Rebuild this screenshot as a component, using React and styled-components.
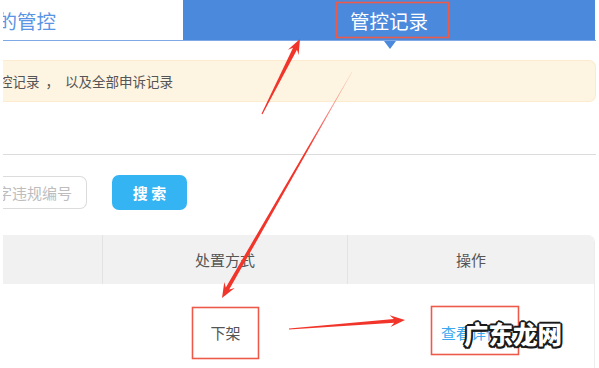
import React from 'react';
import styled, { createGlobalStyle, css } from 'styled-components';

const Global = createGlobalStyle`
  *, *::before, *::after { box-sizing: border-box; }
  html, body { margin: 0; padding: 0; background: #fff; }
  body { font-family: "Noto Sans CJK SC", "Microsoft YaHei", sans-serif; }
`;

const Page = styled.div`
  position: relative;
  width: 599px;
  height: 368px;
  overflow: hidden;
  background: #fff;
`;

const Frame = styled.div`
  margin-left: 3px;
  width: 593px;
  display: flex;
  flex-direction: column;
`;

const TabBar = styled.div`
  display: flex;
  height: 41px;
  border-bottom: 1px solid #7ea8e6;
`;

const Tab = styled.div`
  position: relative;
  display: flex;
  align-items: center;
  white-space: nowrap;
  font-size: 19.5px;
  ${p => p.$active ? css`
    flex: 0 0 412px;
    background: #4b89dc;
    color: #fff;
    justify-content: center;
    &::after {
      content: '';
      position: absolute;
      top: 100%;
      left: 50%;
      margin-left: -5px;
      margin-top: 1px;
      border-top: 8px solid #4b89dc;
      border-left: 6px solid transparent;
      border-right: 6px solid transparent;
    }
  ` : css`
    flex: 0 0 180px;
    color: #5a94e4;
    justify-content: flex-end;
    padding-right: 127px;
    overflow: hidden;
  `}
`;

const Notice = styled.div`
  margin-top: 19px;
  height: 42px;
  background: #fdf4e2;
  border: 1px solid #fcebcc;
  border-left: none;
  border-radius: 0 7px 7px 0;
  display: flex;
  align-items: center;
  font-size: 13.5px;
  color: #555;
`;

const ClipEnd = styled.div`
  flex: 0 0 ${p => p.$w}px;
  display: flex;
  justify-content: flex-end;
  overflow: hidden;
  white-space: pre;
`;

const Divider = styled.div`
  margin-top: 52px;
  height: 1px;
  background: #dcdcdc;
`;

const SearchRow = styled.div`
  margin-top: 20px;
  display: flex;
  align-items: center;
  gap: 25px;
  height: 35px;
`;

const SearchInput = styled.div`
  width: 84px;
  height: 33px;
  border: 1px solid #dcdcdc;
  border-left: none;
  border-radius: 0 7px 7px 0;
  display: flex;
  align-items: center;
  justify-content: flex-end;
  padding-right: 14px;
  overflow: hidden;
  white-space: nowrap;
  font-size: 15px;
  color: #bdbdbd;
`;

const SearchButton = styled.button`
  width: 75px;
  height: 35px;
  border: none;
  border-radius: 7px;
  background: #35b4f3;
  color: #fff;
  font-family: inherit;
  font-size: 15px;
  font-weight: bold;
  padding: 0;
`;

const Table = styled.div`
  margin-top: 25px;
  width: 592px;
  border-right: 1px solid #ececec;
  border-top-right-radius: 7px;
  overflow: hidden;
`;

const Row = styled.div`
  display: grid;
  grid-template-columns: 100px 245px 1fr;
  height: ${p => p.$head ? 49 : 96}px;
  background: ${p => p.$head ? '#f1f1f1' : '#fff'};
`;

const Cell = styled.div`
  display: flex;
  align-items: center;
  justify-content: center;
  font-size: 15px;
  color: ${p => p.$link ? '#3ba8ef' : '#555'};
  border-right: ${p => p.$sep ? '1px solid #e3e3e3' : 'none'};
`;

const Overlay = styled.svg`
  position: absolute;
  left: 0;
  top: 0;
  pointer-events: none;
`;

const Watermark = styled.div`
  position: absolute;
  left: 464px;
  top: 319px;
  font-size: 24.5px;
  font-weight: 900;
  color: #fff;
  line-height: 1.2;
  white-space: nowrap;
  text-shadow:
    -2px 0 #1a1a1a, 2px 0 #1a1a1a, 0 -2px #1a1a1a, 0 2px #1a1a1a,
    -1.5px -1.5px #1a1a1a, 1.5px 1.5px #1a1a1a, -1.5px 1.5px #1a1a1a, 1.5px -1.5px #1a1a1a;
`;

function arrow(x1, y1, x2, y2, tailW, shaftW, headL = 15, headW = 12) {
  const dx = x2 - x1, dy = y2 - y1, len = Math.hypot(dx, dy);
  const ux = dx / len, uy = dy / len, nx = -uy, ny = ux;
  const bx = x2 - ux * headL, by = y2 - uy * headL;
  const jx = bx + ux * 4, jy = by + uy * 4;
  const pts = [
    [x1 + nx * tailW / 2, y1 + ny * tailW / 2],
    [jx + nx * shaftW / 2, jy + ny * shaftW / 2],
    [bx + nx * headW / 2, by + ny * headW / 2],
    [x2, y2],
    [bx - nx * headW / 2, by - ny * headW / 2],
    [jx - nx * shaftW / 2, jy - ny * shaftW / 2],
    [x1 - nx * tailW / 2, y1 - ny * tailW / 2],
  ];
  return pts.map(p => p.map(v => v.toFixed(1)).join(',')).join(' ');
}

export default function App() {
  return (
    <Page>
      <Global />
      <Frame>
        <TabBar>
          <Tab><span>商品违规的管控</span></Tab>
          <Tab $active>管控记录</Tab>
        </TabBar>
        <Notice>
          <ClipEnd $w={170}>{'您可以查看全部管控记录  ，  以及全部申诉记录'}</ClipEnd>
        </Notice>
        <Divider />
        <SearchRow>
          <SearchInput><span>请输入商品名称或关键字违规编号</span></SearchInput>
          <SearchButton>搜 索</SearchButton>
        </SearchRow>
        <Table>
          <Row $head>
            <Cell $sep></Cell>
            <Cell $sep>处置方式</Cell>
            <Cell>操作</Cell>
          </Row>
          <Row>
            <Cell></Cell>
            <Cell>下架</Cell>
            <Cell $link>查看详情</Cell>
          </Row>
        </Table>
      </Frame>
      <Overlay width="599" height="368" viewBox="0 0 599 368">
        <defs>
          <linearGradient id="fade" x1="352" y1="72" x2="222" y2="298" gradientUnits="userSpaceOnUse">
            <stop offset="0" stopColor="#f2352b" stopOpacity="0.2" />
            <stop offset="0.35" stopColor="#f2352b" stopOpacity="1" />
          </linearGradient>
        </defs>
        <g fill="none" stroke="#ee5a4a" strokeWidth="1.6">
          <rect x="336.5" y="2.5" width="112" height="35" />
          <rect x="192.5" y="307.5" width="66" height="51" />
          <rect x="431.5" y="306.5" width="87" height="48" />
        </g>
        <polygon points={arrow(262, 114, 300, 39, 1.2, 4.5)} fill="#f2352b" />
        <polygon points={arrow(352, 72, 222, 298, 0.4, 4)} fill="url(#fade)" />
        <polygon points={arrow(289, 329, 405, 320, 1, 4)} fill="#f2352b" />
      </Overlay>
      <Watermark>广东龙网</Watermark>
    </Page>
  );
}
